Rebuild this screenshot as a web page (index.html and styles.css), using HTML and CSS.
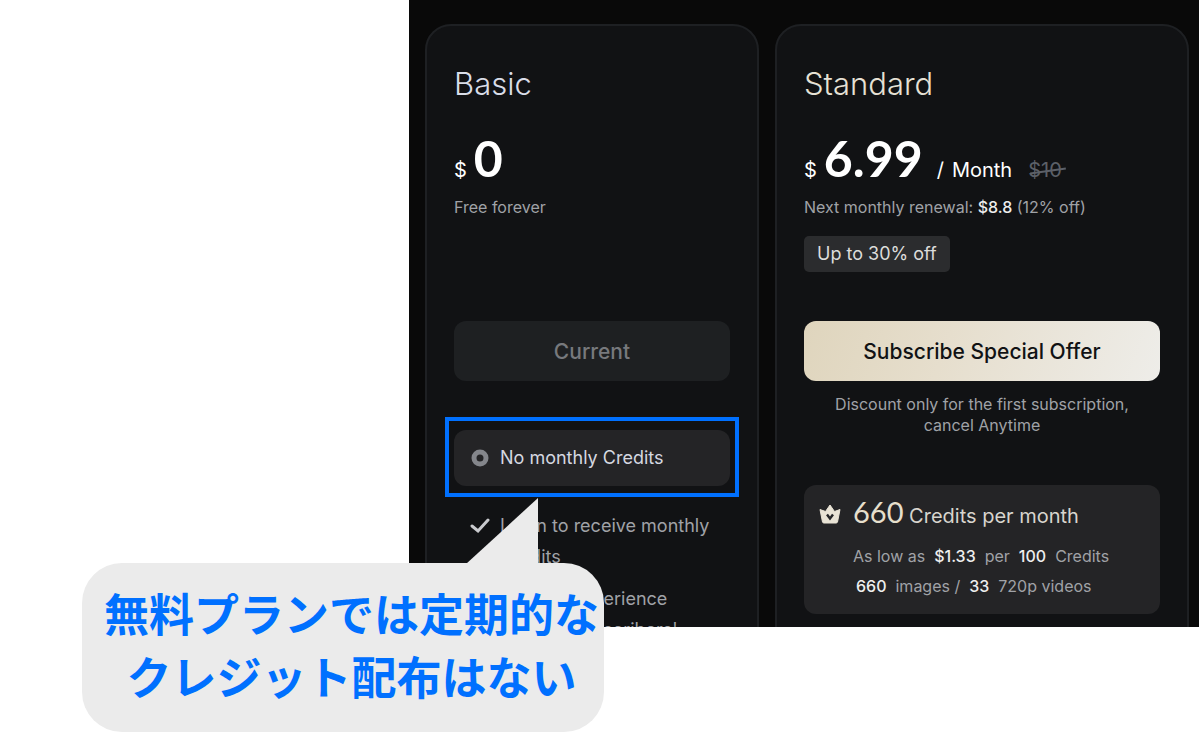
FILE: index.html
```html
<!DOCTYPE html>
<html lang="ja">
<head>
  <meta charset="UTF-8">
  <meta name="viewport" content="width=device-width, initial-scale=1.0">
  <title>Pricing</title>
  <link rel="stylesheet" href="styles.css">
</head>
<body>
  <div class="page">
    <main class="panel" lang="en">
      <section class="card basic">
        <header class="card-header">
          <h2>Basic</h2>
          <div class="price"><span class="currency">$</span><span class="amount">0</span></div>
          <p class="sub">Free forever</p>
        </header>
        <button class="btn btn-current" type="button" disabled>Current</button>
        <div class="credits-box highlight">
          <svg class="icon" viewBox="0 0 20 20" aria-hidden="true"><circle cx="10" cy="10" r="6" fill="none" stroke="#84868b" stroke-width="5"/></svg>
          <span class="no-credits">No monthly Credits</span>
        </div>
        <ul class="features">
          <li>
            <svg class="icon" viewBox="0 0 20 20" aria-hidden="true"><path d="M2 11l6 5L18 5" fill="none" stroke="#c9cace" stroke-width="3" stroke-linecap="round" stroke-linejoin="miter"/></svg>
            <span>Login to receive monthly<br>Credits</span>
          </li>
          <li>
            <svg class="icon" viewBox="0 0 20 20" aria-hidden="true"><path d="M2 11l6 5L18 5" fill="none" stroke="#c9cace" stroke-width="3" stroke-linecap="round" stroke-linejoin="miter"/></svg>
            <span>Preview experience<br>of other subscribers'</span>
          </li>
        </ul>
      </section>

      <section class="card standard">
        <header class="card-header">
          <h2>Standard</h2>
          <div class="price">
            <span class="currency">$</span><span class="amount">6.99</span>
            <span class="period"><span>/</span><span>Month</span></span>
            <del>$10</del>
          </div>
          <p class="sub">Next monthly renewal: <strong>$8.8</strong> (12% off)</p>
          <span class="badge">Up to 30% off</span>
        </header>
        <button class="btn btn-subscribe" type="button">Subscribe Special Offer</button>
        <p class="note">Discount only for the first subscription,<br>cancel Anytime</p>
        <div class="credits-box credits-detail">
          <svg class="crown" viewBox="0 0 22 20" aria-hidden="true">
            <path d="M1 5.500L6.500 7.500L11 1L15.500 7.500L21 5.500L18.500 18Q18.200 19 17 19H5Q3.800 19 3.500 18Z" fill="#e9e3d5" stroke="#e9e3d5" stroke-linejoin="round"/>
            <path d="M8 10.500l3 4l3-4" fill="none" stroke="#242426" stroke-width="2.400"/>
          </svg>
          <div>
            <p class="credits-title"><span class="credits-count">660</span> Credits per month</p>
            <p class="credits-line"><span>As low as</span><strong>$1.33</strong><span>per</span><strong>100</strong><span>Credits</span></p>
            <p class="credits-line inset"><strong>660</strong><span>images /</span><strong>33</strong><span>720p videos</span></p>
          </div>
        </div>
      </section>
    </main>

    <aside class="callout">
      <svg class="callout-tail" viewBox="0 0 72 66" aria-hidden="true"><path d="M72 0V66H0Z" fill="#ebebeb"/></svg>
      <p>無料プランでは定期的な<br>クレジット配布はない</p>
    </aside>
  </div>
</body>
</html>
```
FILE: styles.css
```css
* {
  box-sizing: border-box;
}
body {
  margin: 0;
  background-color: #fff;
  font-family: Inter, "Liberation Sans", sans-serif;
  font-size: 16px;
  color: #a0a2a7;
}
h2, p, ul {
  margin: 0;
  padding: 0;
}
.page {
  position: relative;
  height: 100vh;
  padding: 0 1px 123px 409px;
}
.panel {
  display: grid;
  grid-template-columns: 334fr 414fr;
  gap: 16px;
  height: 100%;
  padding: 24px 10px 0 16px;
  background-color: #090909;
  overflow: hidden;
}
.card {
  min-width: 0;
  height: 900px;
  padding: 38px 27px;
  border: 2px solid #1e2023;
  border-radius: 26px;
  background-color: #111214;
}
.card-header {
  min-height: 257px;
}
h2 {
  font-size: 31px;
  line-height: 40px;
  font-weight: 300;
  color: #d9dde8;
}
.standard h2 {
  color: #e6e1d5;
}
.price {
  display: flex;
  align-items: baseline;
  height: 60px;
  margin: 24px 0 9px;
  line-height: 60px;
  font-size: 20px;
  color: #fff;
}
.currency {
  margin-right: 7px;
}
.amount {
  font-family: Lato, sans-serif;
  font-size: 50px;
  font-weight: 700;
}
.period {
  display: flex;
  gap: 8px;
  margin-left: 14px;
}
del {
  position: relative;
  margin-left: 16px;
  color: #5c6068;
  text-decoration: none;
}
/* slightly tilted strike line */
del::after {
  content: "";
  position: absolute;
  top: 50%;
  left: 2px;
  right: -4px;
  height: 2px;
  background-color: #5c6068;
  transform: rotate(-8deg);
}
.sub {
  line-height: 20px;
}
strong {
  font-weight: 500;
  color: #eee;
}
.badge {
  display: inline-block;
  margin-top: 19px;
  padding: 0 13px;
  border-radius: 5px;
  background-color: #2b2c2e;
  font-size: 18px;
  line-height: 36px;
  color: #dddddb;
}
.btn {
  display: block;
  width: 100%;
  height: 60px;
  border: none;
  border-radius: 12px;
  font-family: inherit;
  font-size: 21px;
  font-weight: 500;
}
.btn-current {
  background-color: #1e2022;
  color: #77797d;
}
.btn-subscribe {
  background: linear-gradient(110deg, #dfd5bd, #e6decd 40%, #eeede9);
  color: #111214;
  cursor: pointer;
}
.note {
  margin-top: 13px;
  line-height: 21px;
  text-align: center;
}
.credits-box {
  display: flex;
  margin-top: 49px;
  border-radius: 12px;
  background-color: #242426;
}
.highlight {
  position: relative;
  gap: 10px;
  padding: 13px 16px;
  line-height: 30px;
  font-size: 18px;
}
/* blue marker around the row */
.highlight::after {
  content: "";
  position: absolute;
  inset: -13px -9px -11px;
  border: 4px solid #0070ff;
}
.no-credits {
  color: #d5d8e0;
}
.icon {
  flex: none;
  width: 20px;
  height: 20px;
  margin-top: 5px;
}
.features {
  margin-top: 24px;
  list-style: none;
  font-size: 18px;
  line-height: 31px;
}
.features li {
  display: flex;
  gap: 10px;
  margin-bottom: 11px;
  padding-left: 16px;
  white-space: nowrap;
}
.credits-detail {
  gap: 12px;
  padding: 7px 15px 13px;
}
.crown {
  flex: none;
  width: 22px;
  height: 20px;
  margin-top: 12px;
}
.credits-title {
  margin-bottom: 5px;
  line-height: 40px;
  font-size: 20px;
  color: #d8d5ce;
}
.credits-count {
  font-family: Lato, sans-serif;
  font-size: 29px;
  color: #e6dfcc;
}
.credits-line {
  display: flex;
  gap: 9px;
  line-height: 30px;
}
.inset {
  padding-left: 3px;
}
.callout {
  position: absolute;
  top: 563px;
  left: 82px;
  padding: 18px 5px 25px 22px;
  border-radius: 40px;
  background-color: #ebebeb;
  font-family: "Noto Sans CJK JP", sans-serif;
  font-size: 45px;
  font-weight: 700;
  line-height: 63px;
  text-align: center;
  white-space: nowrap;
  color: #0070ff;
}
.callout-tail {
  position: absolute;
  top: -65px;
  left: 384px;
  width: 72px;
  height: 66px;
}
```
